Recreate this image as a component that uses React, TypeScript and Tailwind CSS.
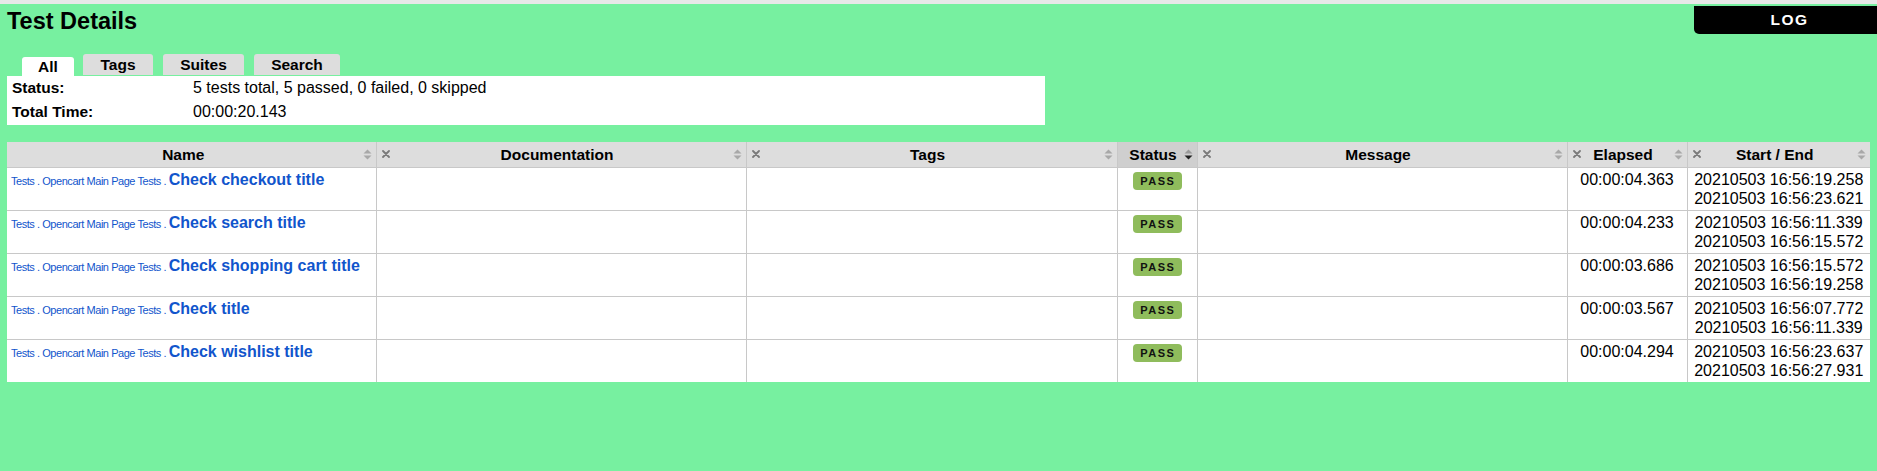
import React from 'react';

type Test = {
  name: string;
  elapsed: string;
  start: string;
  end: string;
};

const tests: Test[] = [
  { name: 'Check checkout title', elapsed: '00:00:04.363', start: '20210503 16:56:19.258', end: '20210503 16:56:23.621' },
  { name: 'Check search title', elapsed: '00:00:04.233', start: '20210503 16:56:11.339', end: '20210503 16:56:15.572' },
  { name: 'Check shopping cart title', elapsed: '00:00:03.686', start: '20210503 16:56:15.572', end: '20210503 16:56:19.258' },
  { name: 'Check title', elapsed: '00:00:03.567', start: '20210503 16:56:07.772', end: '20210503 16:56:11.339' },
  { name: 'Check wishlist title', elapsed: '00:00:04.294', start: '20210503 16:56:23.637', end: '20210503 16:56:27.931' },
];

function SortIcon({ desc }: { desc?: boolean }) {
  return (
    <svg width="9" height="11" viewBox="0 0 9 11" className="shrink-0">
      <path d="M0.5 4.5 L4.5 0.5 L8.5 4.5 Z" fill={desc ? '#9a9a9a' : '#a8a8a8'} />
      <path d="M0.5 6.5 L8.5 6.5 L4.5 10.5 Z" fill={desc ? '#222' : '#a8a8a8'} />
    </svg>
  );
}

function HideIcon() {
  return (
    <span className="flex w-0 overflow-visible">
      <svg width="8" height="8" viewBox="0 0 8 8" className="shrink-0">
        <path d="M1 1 L7 7 M7 1 L1 7" stroke="#7a7a7a" strokeWidth="1.8" strokeLinecap="round" />
      </svg>
    </span>
  );
}

function Th({ label, hide, desc, first }: { label: string; hide?: boolean; desc?: boolean; first?: boolean }) {
  return (
    <th
      className={`h-[25px] p-0 font-bold ${desc ? 'bg-[#cfcfcf]' : 'bg-[#dddddd]'} ${first ? '' : 'border-l border-[#c8c8c8]'}`}
    >
      <div className="flex items-center pl-[5px] pr-[4px]">
        {hide && <HideIcon />}
        <span className={`flex-1 text-center leading-[19px] ${first ? 'pr-[8px]' : ''}`}>{label}</span>
        <SortIcon desc={desc} />
      </div>
    </th>
  );
}

export default function App() {
  return (
    <div className="min-h-screen bg-[#77f0a0] font-['Liberation_Sans',Arial,sans-serif] text-[15.5px] text-black">
      <div className="h-[4px] bg-[#e8e8e8]" />

      {/* header */}
      <div className="flex items-start justify-between">
        <h1 className="ml-[7px] mt-[4px] text-[23.5px] font-bold leading-[26px]">Test Details</h1>
        <div className="mt-[2px] flex h-[28px] w-[183px] items-center justify-center rounded-bl-[5px] bg-black pl-[8px] text-[15.5px] font-bold tracking-[1.5px] text-white">
          LOG
        </div>
      </div>

      {/* tabs */}
      <div className="mt-[20px] flex h-[22px] items-end pl-[22px]">
        <div className="flex h-[19px] w-[52px] items-center justify-center rounded-t-[3px] bg-white font-bold">All</div>
        <div className="mb-[1px] ml-[9px] flex h-[21px] w-[70px] items-center justify-center rounded-t-[3px] bg-[#dddddd] font-bold">Tags</div>
        <div className="mb-[1px] ml-[10px] flex h-[21px] w-[81px] items-center justify-center rounded-t-[3px] bg-[#dddddd] font-bold">Suites</div>
        <div className="mb-[1px] ml-[10px] flex h-[21px] w-[86px] items-center justify-center rounded-t-[3px] bg-[#dddddd] font-bold">Search</div>
      </div>
      <div className="ml-[7px] h-[49px] w-[1038px] bg-white pl-[5px]">
        <div className="grid grid-cols-[181px_1fr] leading-[24px]">
          <span className="font-bold">Status:</span>
          <span className="text-[16px]">5 tests total, 5 passed, 0 failed, 0 skipped</span>
          <span className="font-bold">Total Time:</span>
          <span className="text-[16px]">00:00:20.143</span>
        </div>
      </div>

      {/* details table */}
      <table className="ml-[7px] mt-[17px] w-[1863px] table-fixed border-collapse bg-white">
        <colgroup>
          <col className="w-[369px]" />
          <col className="w-[370px]" />
          <col className="w-[371px]" />
          <col className="w-[80px]" />
          <col className="w-[370px]" />
          <col className="w-[120px]" />
          <col className="w-[183px]" />
        </colgroup>
        <thead>
          <tr>
            <Th label="Name" first />
            <Th label="Documentation" hide />
            <Th label="Tags" hide />
            <Th label="Status" desc />
            <Th label="Message" hide />
            <Th label="Elapsed" hide />
            <Th label="Start / End" hide />
          </tr>
        </thead>
        <tbody>
          {tests.map((t) => (
            <tr key={t.name} className="border-t border-[#c8c8c8] align-top text-[16px] leading-[19px]">
              <td className="h-[42px] px-[4px] py-[2px] text-[#1155cc]">
                <span className="text-[11px] tracking-[-0.45px]">Tests . Opencart Main Page Tests . </span>
                <span className="font-bold">{t.name}</span>
              </td>
              <td className="border-l border-[#c8c8c8]" />
              <td className="border-l border-[#c8c8c8]" />
              <td className="border-l border-[#c8c8c8] py-[2px] text-center">
                <span className="mt-[2px] inline-block h-[18px] w-[49px] rounded-[4px] bg-[#8fbc5c] pl-[1.5px] text-center text-[11px] font-bold leading-[18px] tracking-[1.5px] text-[#111]">
                  PASS
                </span>
              </td>
              <td className="border-l border-[#c8c8c8]" />
              <td className="border-l border-[#c8c8c8] px-[4px] py-[2px] text-center">{t.elapsed}</td>
              <td className="border-l border-[#c8c8c8] px-[4px] py-[2px] text-center">
                <div>{t.start}</div>
                <div>{t.end}</div>
              </td>
            </tr>
          ))}
        </tbody>
      </table>
    </div>
  );
}
